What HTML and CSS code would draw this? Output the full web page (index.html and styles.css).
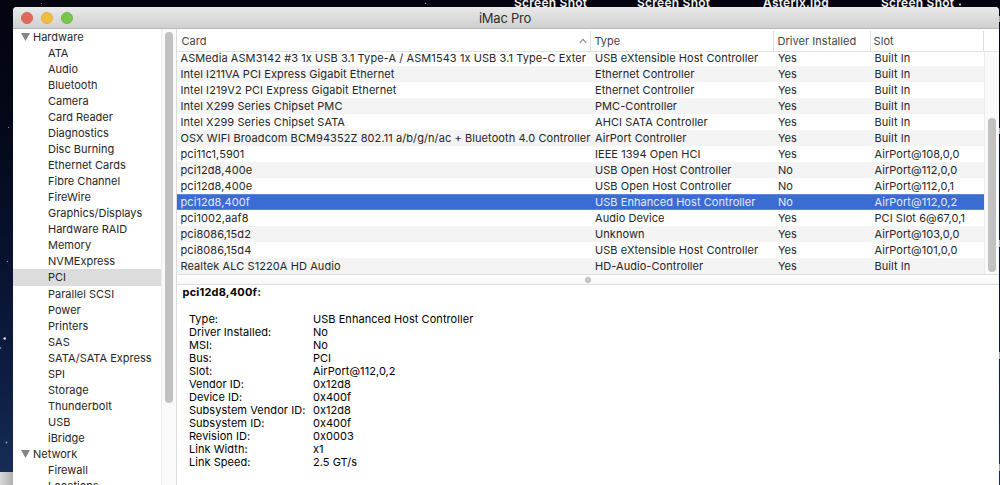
FILE: index.html
```html
<!DOCTYPE html>
<html lang="en">
<head>
<meta charset="utf-8">
<title>iMac Pro</title>
<link rel="stylesheet" href="styles.css">
</head>
<body>
<div class="desktop">
  <svg class="stars" width="1000" height="485" aria-hidden="true">
    <g fill="#9aa5c4">
      <circle cx="4.7" cy="338.5" r="1.3" fill="#dde4f4"/><circle cx="0.5" cy="348" r=".8"/><circle cx="6.5" cy="442.5" r=".9"/><circle cx="7.5" cy="261.5" r=".7"/><circle cx="8.500" cy="127.500" r=".6"/><circle cx="41.500" cy="3.500" r=".5"/><circle cx="425.500" cy="3.500" r=".7"/><circle cx="960" cy="4.500" r="1" fill="#eee"/>
    </g>
    <g fill="#a5a5a9">
      <rect x="999" y="16" width="1" height="6"/><rect x="999" y="128" width="1" height="6"/><rect x="999" y="240" width="1" height="7"/><rect x="999" y="352" width="1" height="7"/><rect x="999" y="464" width="1" height="7"/>
    </g>
  </svg>
  <div class="dock-edge"></div>
  <span class="file-label file-a">Screen Shot</span>
  <span class="file-label file-b">Screen Shot</span>
  <span class="file-label file-c">Asterix.jpg</span>
  <span class="file-label file-d">Screen Shot</span>

  <main class="window">
    <header class="titlebar">
      <div class="lights"><i class="light red"></i><i class="light yellow"></i><i class="light green"></i></div>
      <h1 class="title">iMac Pro</h1>
    </header>
    <div class="content">
      <nav class="sidebar">
        <ul class="tree">
          <li class="group"><svg class="arrow" width="9" height="8" viewBox="0 0 9 8"><path d="M0 0h9L4.500 8z"/></svg>Hardware</li>
          <li>ATA</li><li>Audio</li><li>Bluetooth</li><li>Camera</li><li>Card Reader</li><li>Diagnostics</li><li>Disc Burning</li><li>Ethernet Cards</li><li>Fibre Channel</li><li>FireWire</li><li>Graphics/Displays</li><li>Hardware RAID</li><li>Memory</li><li>NVMExpress</li><li class="current">PCI</li><li>Parallel SCSI</li><li>Power</li><li>Printers</li><li>SAS</li><li>SATA/SATA Express</li><li>SPI</li><li>Storage</li><li>Thunderbolt</li><li>USB</li><li>iBridge</li>
          <li class="group"><svg class="arrow" width="9" height="8" viewBox="0 0 9 8"><path d="M0 0h9L4.500 8z"/></svg>Network</li>
          <li>Firewall</li><li>Locations</li>
        </ul>
        <div class="scroller side-scroller"><div class="thumb"></div></div>
      </nav>
      <section class="main">
        <div class="head">
          <div class="th">Card<svg class="sort" width="8" height="6" viewBox="0 0 8 6"><path d="M.8 4.800 4 1.300 7.200 4.800"/></svg></div>
          <div class="th">Type</div><div class="th">Driver Installed</div><div class="th">Slot</div>
        </div>
        <div class="table">
          <div class="rows">
            <div class="row"><span>ASMedia ASM3142 #3 1x USB 3.1 Type-A / ASM1543 1x USB 3.1 Type-C Exter</span><span>USB eXtensible Host Controller</span><span>Yes</span><span>Built In</span></div>
            <div class="row"><span>Intel I211VA PCI Express Gigabit Ethernet</span><span>Ethernet Controller</span><span>Yes</span><span>Built In</span></div>
            <div class="row"><span>Intel I219V2 PCI Express Gigabit Ethernet</span><span>Ethernet Controller</span><span>Yes</span><span>Built In</span></div>
            <div class="row"><span>Intel X299 Series Chipset PMC</span><span>PMC-Controller</span><span>Yes</span><span>Built In</span></div>
            <div class="row"><span>Intel X299 Series Chipset SATA</span><span>AHCI SATA Controller</span><span>Yes</span><span>Built In</span></div>
            <div class="row"><span>OSX WIFI Broadcom BCM94352Z 802.11 a/b/g/n/ac + Bluetooth 4.0 Controller</span><span>AirPort Controller</span><span>Yes</span><span>Built In</span></div>
            <div class="row"><span>pci11c1,5901</span><span>IEEE 1394 Open HCI</span><span>Yes</span><span>AirPort@108,0,0</span></div>
            <div class="row"><span>pci12d8,400e</span><span>USB Open Host Controller</span><span>No</span><span>AirPort@112,0,0</span></div>
            <div class="row"><span>pci12d8,400e</span><span>USB Open Host Controller</span><span>No</span><span>AirPort@112,0,1</span></div>
            <div class="row selected"><span>pci12d8,400f</span><span>USB Enhanced Host Controller</span><span>No</span><span>AirPort@112,0,2</span></div>
            <div class="row"><span>pci1002,aaf8</span><span>Audio Device</span><span>Yes</span><span>PCI Slot 6@67,0,1</span></div>
            <div class="row"><span>pci8086,15d2</span><span>Unknown</span><span>Yes</span><span>AirPort@103,0,0</span></div>
            <div class="row"><span>pci8086,15d4</span><span>USB eXtensible Host Controller</span><span>Yes</span><span>AirPort@101,0,0</span></div>
            <div class="row"><span>Realtek ALC S1220A HD Audio</span><span>HD-Audio-Controller</span><span>Yes</span><span>Built In</span></div>
          </div>
          <div class="scroller table-scroller"><div class="thumb"></div></div>
        </div>
        <div class="splitter"><i class="knob"></i></div>
        <div class="detail">
          <h2 class="detail-title">pci12d8,400f:</h2>
          <dl class="facts">
            <dt>Type:</dt><dd>USB Enhanced Host Controller</dd>
            <dt>Driver Installed:</dt><dd>No</dd>
            <dt>MSI:</dt><dd>No</dd>
            <dt>Bus:</dt><dd>PCI</dd>
            <dt>Slot:</dt><dd>AirPort@112,0,2</dd>
            <dt>Vendor ID:</dt><dd>0x12d8</dd>
            <dt>Device ID:</dt><dd>0x400f</dd>
            <dt>Subsystem Vendor ID:</dt><dd>0x12d8</dd>
            <dt>Subsystem ID:</dt><dd>0x400f</dd>
            <dt>Revision ID:</dt><dd>0x0003</dd>
            <dt>Link Width:</dt><dd>x1</dd>
            <dt>Link Speed:</dt><dd>2.5 GT/s</dd>
          </dl>
        </div>
      </section>
    </div>
  </main>
</div>
</body>
</html>
```
FILE: styles.css
```css
* { box-sizing: border-box; }
body { margin: 0; font: 11px/16px Inter, Roboto, sans-serif; color: #262626; }
.desktop { position: relative; width: 1000px; height: 485px; overflow: hidden; padding: 7px 1px 0 13px; background: linear-gradient(#03040f 0, #040818 120px, #081230 260px, #0e1d42 380px, #172c56 472px); }
.stars { position: absolute; left: 0; top: 0; }
.dock-edge { position: absolute; left: 0; top: 472px; width: 13px; height: 13px; background: linear-gradient(90deg, #d8d8d8, #b0b0b0); }
.file-label { position: absolute; top: -5px; font-size: 12px; font-weight: 600; letter-spacing: .25px; color: #f4f4f4; white-space: nowrap; }
.file-a { left: 514px; }
.file-b { left: 637px; }
.file-c { left: 763px; }
.file-d { left: 881px; }
.window { position: relative; display: flex; flex-direction: column; height: 478px; border-radius: 4px 4px 0 0; overflow: hidden; background: #fff; }
.titlebar { flex: none; display: grid; grid-template-columns: 60px 1fr 60px; align-items: center; height: 22px; padding: 0 8px; background: linear-gradient(#e9e9e9, #d0d0d0); border-bottom: 1px solid #b8b8b8; }
.lights { display: flex; gap: 8px; }
.light { width: 12px; height: 12px; border-radius: 50%; }
.red { background: #e0695c; border: 1px solid #d86256; }
.yellow { background: #efbd42; border: 1px solid #dfad3a; }
.green { background: #79c64c; border: 1px solid #6cb842; }
.title { margin: 0; padding-right: 2px; text-align: center; font-size: 13px; font-weight: 400; color: #303030; letter-spacing: -.25px; }
.content { display: flex; flex: 1; min-height: 0; }
.sidebar { display: flex; flex: none; width: 164px; border-right: 1px solid #dcdcdc; overflow: hidden; }
.tree { flex: 1; margin: 0; padding: 0; list-style: none; }
.tree li { height: 16.04px; padding-left: 35px; white-space: nowrap; }
.tree .group { display: flex; align-items: center; gap: 3px; padding-left: 8px; }
.arrow { fill: #858585; }
.tree .current { background: #dcdcdc; }
.scroller { flex: none; background: #fafafa; border-left: 1px solid #ebebeb; }
.thumb { width: 8px; border-radius: 4px; background: #c1c1c1; }
.side-scroller { width: 15px; padding: 3px 0 0 3px; }
.side-scroller .thumb { height: 371px; }
.main { display: flex; flex: 1; min-width: 0; flex-direction: column; }
.head, .row { display: grid; grid-template-columns: 414px 183px 97px 1fr; }
.head { flex: none; height: 23px; padding: 2px 15px 1px 0; border-bottom: 1px solid #e2e2e2; color: #444; }
.th { display: flex; align-items: center; justify-content: space-between; padding: 0 3px 0 3.4px; border-right: 1px solid #dedede; line-height: 20px; letter-spacing: .05px; }
.th:first-child { padding-left: 4.4px; }
.th:last-child { padding-left: 2.6px; }
.sort { fill: none; stroke: #888; stroke-width: 1.1; }
.table { display: flex; flex: none; height: 222px; }
.rows { display: flex; flex: 1; flex-direction: column; justify-content: flex-end; overflow: hidden; }
.row { flex: none; height: 16px; white-space: nowrap; }
.row span { padding-left: 4px; }
.row span:first-child { padding-left: 3.5px; letter-spacing: .08px; }
.row span:nth-child(2) { letter-spacing: .06px; }
.row span:last-child { padding-left: 3.5px; letter-spacing: .06px; }
.row:nth-child(even) { background: #f4f4f4; }
.row:first-child { height: 14px; line-height: 13px; }
.rows .selected { background: #3b6cd4; color: #e4ebfb; border: solid #5a86e0; border-width: 1px 0; line-height: 15px; }
.table-scroller { width: 15px; padding: 66px 0 0 3px; }
.table-scroller .thumb { height: 154px; }
.splitter { display: flex; flex: none; align-items: center; justify-content: center; height: 11px; border: solid #dedede; border-width: 1px 0; background: linear-gradient(#fff, #f8f8f8); }
.knob { width: 6px; height: 6px; border: 1px solid #b0b0b0; border-radius: 50%; background: #cdcdcd; }
.detail { padding: 0 0 0 5.5px; color: #000; }
.detail-title { margin: 0; font-size: 11px; line-height: 14px; font-weight: 700; letter-spacing: .2px; }
.facts { display: grid; grid-template-columns: 124px 1fr; margin: 14px 0 0 6.4px; line-height: 13px; letter-spacing: .06px; }
.facts dd { margin: 0; }
```
